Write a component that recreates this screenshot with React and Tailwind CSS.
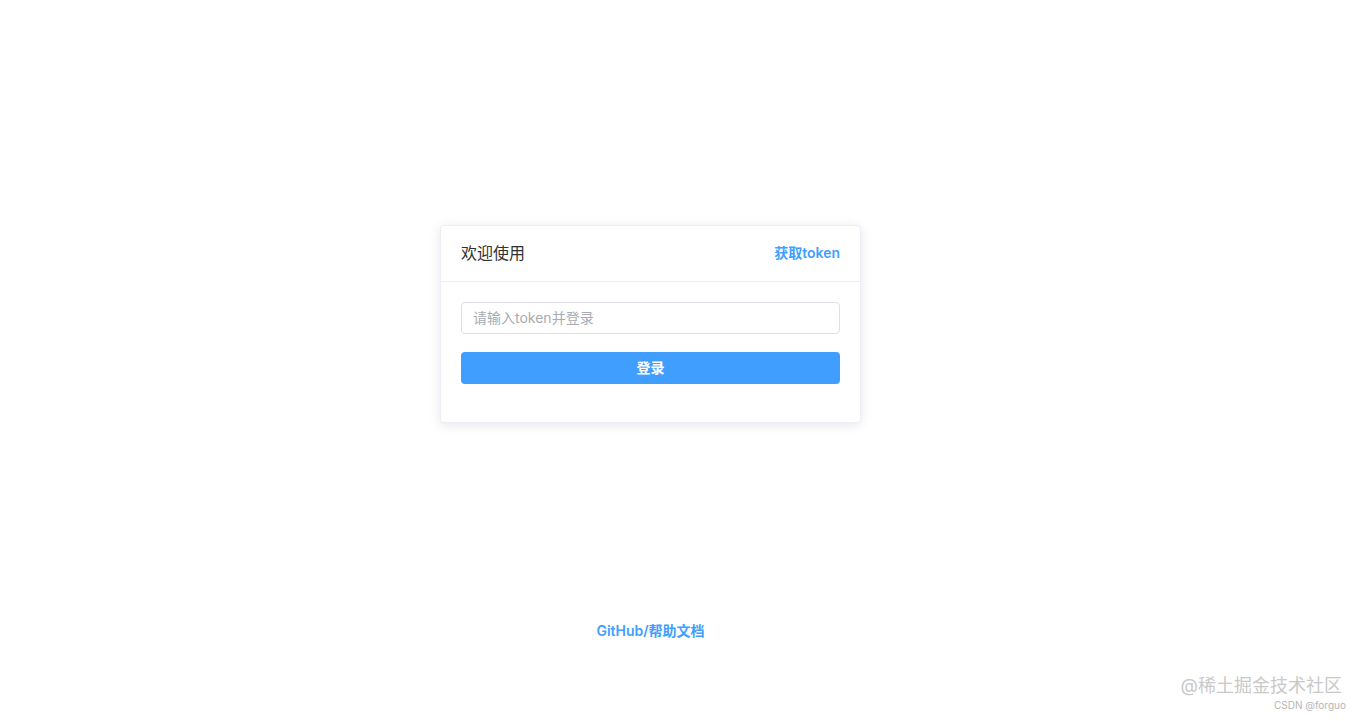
import { useState } from "react";

export default function App() {
  const [token, setToken] = useState("");

  return (
    <div
      className="relative min-h-screen w-full bg-white"
      style={{ fontFamily: '"Helvetica Neue", Inter, "Noto Sans CJK SC", sans-serif' }}
    >
      <div className="flex flex-col items-center pr-[59px] pt-[225px]">
        {/* login card */}
        <div className="w-[421px] rounded border border-[#ebeef5] bg-white shadow-[0_2px_12px_0_rgba(0,0,0,0.1)]">
          <div className="flex h-[56px] items-center justify-between border-b border-[#ebeef5] px-5 pb-[2px]">
            <span className="text-[16px] text-[#303133]">欢迎使用</span>
            <a href="#" className="text-[14px] font-semibold text-[#409eff]">
              获取token
            </a>
          </div>
          <div className="px-5 pt-5 pb-[38px]">
            <input
              value={token}
              onChange={(e) => setToken(e.target.value)}
              placeholder="请输入token并登录"
              className="h-[32px] w-full rounded border border-[#dcdfe6] px-[11px] pb-[2px] text-[14px] text-[#606266] outline-none placeholder:text-[#a8abb2]"
            />
            <button className="mt-[18px] h-[32px] w-full rounded bg-[#409eff] pb-[2px] text-[14px] font-semibold text-white">
              登录
            </button>
          </div>
        </div>

        <a href="#" className="mt-[197px] text-[14px] font-semibold text-[#409eff]">
          GitHub/帮助文档
        </a>
      </div>

      {/* watermark */}
      <div className="absolute bottom-[11px] right-[18px] flex flex-col items-end leading-none text-[#c9c9c9]">
        <span className="text-[18px]">@稀土掘金技术社区</span>
        <span className="mr-[-4px] mt-[5px] text-[10px] text-[#b5b5b5]">CSDN @forguo</span>
      </div>
    </div>
  );
}
